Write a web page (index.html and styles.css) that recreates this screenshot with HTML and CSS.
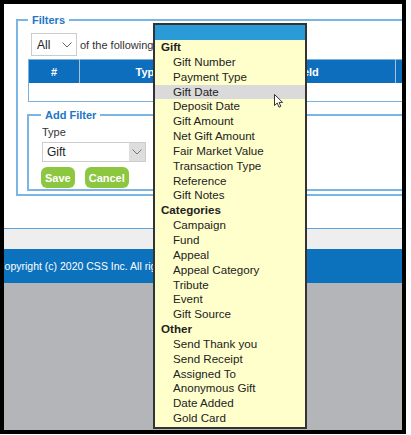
FILE: index.html
```html
<!DOCTYPE html>
<html lang="en">
<head>
    <meta charset="UTF-8">
    <meta name="viewport" content="width=device-width, initial-scale=1.0">
    <title>Filters</title>
    <link rel="stylesheet" href="styles.css">
</head>
<body>
    <div class="frame">
        <div class="page">
            <div class="main">
                <fieldset class="filters">
                    <legend>Filters</legend>
                    <div class="match-row">
                        <div class="select select-all">
                            <span>All</span>
                            <svg width="10" height="6" viewBox="0 0 10 6"><polyline points="0.5,0.5 5,5 9.5,0.5" fill="none" stroke="#666" stroke-width="1"/></svg>
                        </div>
                        <span class="match-text">of the following</span>
                    </div>
                    <table class="filter-table">
                        <thead>
                            <tr>
                                <th class="col-num">#</th>
                                <th class="col-type">Type</th>
                                <th class="col-field">Field</th>
                                <th class="col-value">Value</th>
                            </tr>
                        </thead>
                        <tbody>
                            <tr><td></td><td></td><td></td><td></td></tr>
                        </tbody>
                    </table>
                    <fieldset class="add-filter">
                        <legend>Add Filter</legend>
                        <label class="field-label">Type</label>
                        <div class="select select-type">
                            <span>Gift</span>
                            <span class="select-arrow">
                                <svg width="10" height="6" viewBox="0 0 10 6"><polyline points="0.5,0.5 5,5 9.5,0.5" fill="none" stroke="#777" stroke-width="1"/></svg>
                            </span>
                        </div>
                        <div class="actions">
                            <button class="btn">Save</button>
                            <button class="btn">Cancel</button>
                        </div>
                    </fieldset>
                </fieldset>
            </div>
            <div class="subbar"></div>
            <div class="footer">Copyright (c) 2020 CSS Inc. All rights reserved.</div>
            <div class="backdrop"></div>
        </div>

        <!-- open list of the Type select -->
        <div class="dropdown">
            <div class="dropdown-head"></div>
            <div class="dropdown-group">Gift</div>
            <div class="dropdown-item">Gift Number</div>
            <div class="dropdown-item">Payment Type</div>
            <div class="dropdown-item hover">Gift Date</div>
            <div class="dropdown-item">Deposit Date</div>
            <div class="dropdown-item">Gift Amount</div>
            <div class="dropdown-item">Net Gift Amount</div>
            <div class="dropdown-item">Fair Market Value</div>
            <div class="dropdown-item">Transaction Type</div>
            <div class="dropdown-item">Reference</div>
            <div class="dropdown-item">Gift Notes</div>
            <div class="dropdown-group">Categories</div>
            <div class="dropdown-item">Campaign</div>
            <div class="dropdown-item">Fund</div>
            <div class="dropdown-item">Appeal</div>
            <div class="dropdown-item">Appeal Category</div>
            <div class="dropdown-item">Tribute</div>
            <div class="dropdown-item">Event</div>
            <div class="dropdown-item">Gift Source</div>
            <div class="dropdown-group">Other</div>
            <div class="dropdown-item">Send Thank you</div>
            <div class="dropdown-item">Send Receipt</div>
            <div class="dropdown-item">Assigned To</div>
            <div class="dropdown-item">Anonymous Gift</div>
            <div class="dropdown-item">Date Added</div>
            <div class="dropdown-item">Gold Card</div>
        </div>

        <svg class="cursor" width="10" height="15" viewBox="0 0 10 15">
            <path d="M0.5,0.5 L0.5,11.5 L3.2,9 L5,13.2 L6.8,12.4 L5.1,8.4 L8.6,8.4 Z" fill="#fff" stroke="#333" stroke-width="1" stroke-linejoin="round"/>
        </svg>
    </div>
</body>
</html>
```

FILE: styles.css
```css
body {
    margin: 0;
    font-family: "Liberation Sans", Arial, sans-serif;
    font-size: 11px;
    color: #222;
    background-color: #fff;
}
.frame {
    width: 398px;
    height: 426px;
    border: 4px solid #000;
    overflow: hidden;
    position: relative; /* anchor for the open list */
}
.page {
    width: 600px;
}
.main {
    box-sizing: border-box;
    height: 225px;
    padding: 8px 0 0 12px;
    border-bottom: 1px solid #5fa3dc;
}
fieldset {
    margin: 0;
    border: 2px solid #7ab5e4;
}
legend {
    padding: 0 4px;
    font-weight: bold;
    font-size: 11px;
    line-height: 16px;
    color: #2376c6;
}
.filters {
    width: 540px;
    padding: 5px 10px 3px 10px;
}
.match-row {
    display: flex;
    align-items: center;
    gap: 3px;
    margin-left: 3px;
}
.select {
    box-sizing: border-box;
    display: flex;
    align-items: center;
    justify-content: space-between;
    border: 1px solid #ccc;
    background-color: #fff;
    font-size: 12px;
    color: #222;
}
.select-all {
    width: 46px;
    height: 23px;
    padding: 0 4px 0 5px;
}
.match-text {
    color: #333;
}
.filter-table {
    width: 520px;
    margin-top: 3px;
    border-collapse: collapse;
    border: 1px solid #7ab3e0;
}
.filter-table th {
    height: 23px;
    padding: 0;
    background-color: #0c6ebd;
    color: #fff;
    font-weight: bold;
    border-right: 1px solid #a7c3dc;
}
.filter-table td {
    height: 18px;
    padding: 0;
    background-color: #fff;
}
.col-num { width: 50px; }
.col-type { width: 136px; }
.col-field { width: 178px; }
.add-filter {
    margin: 5px 0 0 -1px;
    padding: 2px 10px 1px 12px;
}
.field-label {
    display: block;
    line-height: 15px;
    color: #333;
    margin-left: 1px;
}
.select-type {
    width: 104px;
    height: 20px;
    margin-top: 2px;
    margin-left: 1px;
    padding: 0 0 0 4px;
}
.select-arrow {
    display: flex;
    align-items: center;
    justify-content: center;
    width: 16px;
    height: 18px;
    background-color: #ddd;
}
.actions {
    display: flex;
    gap: 10px;
    margin-top: 5px;
}
.btn {
    height: 21px;
    padding: 0 4px;
    border: none;
    border-radius: 6px;
    background-color: #8dc63f;
    color: #fff;
    font-family: "Liberation Sans", Arial, sans-serif;
    font-weight: bold;
    font-size: 11px;
}
.subbar {
    height: 20px;
    background-color: #eeeeee;
}
.footer {
    height: 34px;
    line-height: 34px;
    background-color: #0d72bd;
    color: #fff;
    font-size: 10.5px;
    white-space: nowrap;
    text-indent: -7px;
}
.backdrop {
    height: 200px;
    background-color: #b4b5b9;
}
.dropdown {
    position: absolute;
    left: 149px;
    top: 19px;
    box-sizing: border-box;
    width: 154px;
    height: 406px;
    border: 2px solid #333;
    background-color: #ffffcc;
    font-size: 11.6px;
    color: #222;
    overflow: hidden;
}
.dropdown-head {
    height: 15px;
    background-color: #2b9bd8;
}
.dropdown-group {
    line-height: 14.85px;
    padding-left: 6px;
    font-weight: bold;
}
.dropdown-item {
    line-height: 14.85px;
    padding-left: 18px;
}
.dropdown-item.hover {
    background-color: #dadada;
}
.cursor {
    position: absolute;
    left: 270px;
    top: 90px;
}
```
